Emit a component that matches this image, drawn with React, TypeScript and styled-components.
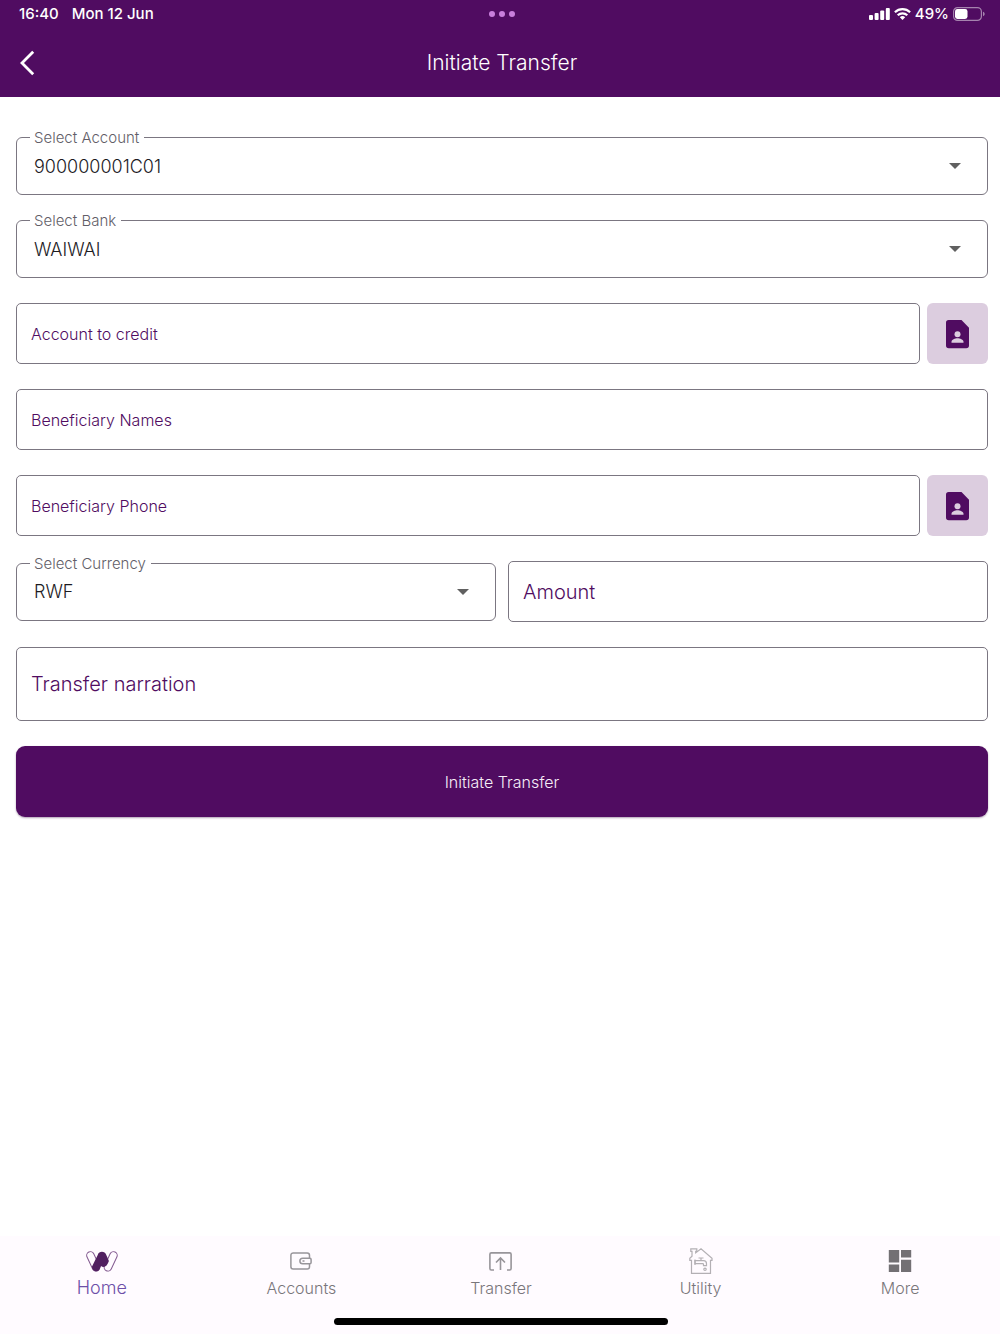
import React from 'react';
import styled, { createGlobalStyle } from 'styled-components';

const color = {
  brand: '#500c61',
  brandSoft: '#dccddf',
  outline: '#7b7681',
  label: '#625e68',
  text: '#1d1b1f',
  nav: '#fffbff',
  navText: '#79767a',
  navActive: '#6d4fa8',
};

const GlobalStyle = createGlobalStyle`
  *, *::before, *::after { box-sizing: border-box; }
  body {
    margin: 0;
    background: #fff;
    color: ${color.text};
    font-family: Inter, "Open Sans", sans-serif;
  }
  button, input, select { font: inherit; }
`;

const Page = styled.div`
  display: flex;
  flex-direction: column;
  min-height: 100vh;
`;

const Header = styled.header`
  background: ${color.brand};
  color: #fff;
`;

const StatusBar = styled.div`
  display: grid;
  grid-template-columns: 1fr auto 1fr;
  align-items: center;
  height: 28px;
  padding: 0 15px 0 19px;
  font-size: 15px;
  font-weight: 500;
  line-height: 20px;
`;

const StatusGroup = styled.div<{ $end?: boolean; $gap: number }>`
  display: flex;
  align-items: center;
  justify-content: ${(p) => (p.$end ? 'flex-end' : 'flex-start')};
  gap: ${(p) => p.$gap}px;
`;

const Dots = styled.div`
  display: flex;
  gap: 4px;
`;

const Dot = styled.span`
  width: 6px;
  height: 6px;
  border-radius: 50%;
  background: #c97fdc;
`;

const TitleBar = styled.div`
  display: grid;
  grid-template-columns: 48px 1fr 48px;
  align-items: center;
  height: 69px;
  padding: 0 12px 0 16px;
`;

const BackButton = styled.button`
  display: flex;
  align-items: center;
  width: 48px;
  height: 48px;
  padding: 0 0 0 3px;
  border: 0;
  background: none;
  color: inherit;
  cursor: pointer;
`;

const Title = styled.h1`
  margin: 0;
  font-size: 21px;
  font-weight: 300;
  line-height: 28px;
  text-align: center;
`;

const Form = styled.form`
  display: flex;
  flex: 1;
  flex-direction: column;
  gap: 25px;
  padding: 40px 12px 24px 16px;
`;

const PickerRow = styled.div`
  display: grid;
  grid-template-columns: 1fr 61px;
  gap: 7px;
`;

const HalfRow = styled.div`
  display: grid;
  grid-template-columns: 1fr 1fr;
  align-items: center;
  gap: 12px;
`;

const SelectBox = styled.div`
  position: relative;
`;

const FloatingLabel = styled.label`
  position: absolute;
  top: -9px;
  left: 14px;
  padding: 0 5px 0 4px;
  background: #fff;
  color: ${color.label};
  font-size: 15px;
  font-weight: 300;
  line-height: 20px;
`;

const Select = styled.select`
  display: block;
  width: 100%;
  height: 58px;
  padding: 0 48px 0 17px;
  border: 1px solid ${color.outline};
  border-radius: 6px;
  background: #fff;
  color: ${color.text};
  font-size: 18px;
  font-weight: 300;
  appearance: none;
`;

const Caret = styled.svg`
  position: absolute;
  top: 50%;
  right: 27px;
  width: 12px;
  height: 6px;
  margin-top: -3px;
  fill: #606060;
  pointer-events: none;
`;

const Input = styled.input<{ $large?: boolean; $tall?: boolean }>`
  display: block;
  width: 100%;
  min-width: 0;
  height: ${(p) => (p.$tall ? 74 : 61)}px;
  padding: 0 14px;
  border: 1px solid ${color.outline};
  border-radius: 5px;
  background: #fff;
  color: ${color.text};
  font-size: ${(p) => (p.$large ? 20 : 16)}px;
  font-weight: 300;

  &::placeholder {
    color: ${color.brand};
    opacity: 1;
  }
`;

const ContactButton = styled.button`
  display: flex;
  align-items: center;
  justify-content: center;
  height: 61px;
  padding: 0;
  border: 0;
  border-radius: 6px;
  background: ${color.brandSoft};
  color: ${color.brand};
  cursor: pointer;
`;

const SubmitButton = styled.button`
  height: 71px;
  border: 0;
  border-radius: 9px;
  background: ${color.brand};
  box-shadow: 0 1px 2px rgba(60, 20, 70, 0.4);
  color: #f6eef8;
  font-size: 16px;
  font-weight: 300;
  cursor: pointer;
`;

const BottomBar = styled.footer`
  display: flex;
  flex-direction: column;
  align-items: center;
  gap: 20px;
  padding: 12px 0 9px 2px;
  background: ${color.nav};
`;

const Tabs = styled.nav`
  display: grid;
  grid-template-columns: repeat(5, 1fr);
  width: 100%;
`;

const Tab = styled.a<{ $active?: boolean }>`
  display: flex;
  flex-direction: column;
  align-items: center;
  gap: 4px;
  color: ${(p) => (p.$active ? color.navActive : color.navText)};
  font-size: ${(p) => (p.$active ? 18 : 16)}px;
  font-weight: 300;
  line-height: 20px;
  text-decoration: none;
`;

const TabIcon = styled.span`
  display: flex;
  align-items: center;
  height: 26px;
`;

const HomeIndicator = styled.div`
  width: 334px;
  height: 7px;
  border-radius: 4px;
  background: #000;
`;

const SignalIcon = () => (
  <svg width="21" height="12" viewBox="0 0 21 12" fill="#fff" aria-hidden="true">
    <rect x="0" y="7" width="4" height="5" rx="1" />
    <rect x="5.6" y="5" width="4" height="7" rx="1" />
    <rect x="11.2" y="2.5" width="4" height="9.5" rx="1" />
    <rect x="16.8" y="0" width="4" height="12" rx="1" />
  </svg>
);

const WifiIcon = () => (
  <svg width="17" height="12" viewBox="0 0 17 12" fill="none" stroke="#fff" strokeWidth="2.2" aria-hidden="true">
    <path d="M.9 4.3a10.9 10.9 0 0 1 15.2 0" />
    <path d="M3.7 7.3a6.9 6.9 0 0 1 9.600 0" />
    <path d="M8.5 12 5.8 9.300a3.900 3.900 0 0 1 5.400 0Z" fill="#fff" stroke="none" />
  </svg>
);

const BatteryIcon = () => (
  <svg width="32" height="14" viewBox="0 0 32 14" aria-hidden="true">
    <rect x=".6" y=".6" width="27.8" height="12.8" rx="4" fill="none" stroke="#a583ae" strokeWidth="1.2" />
    <rect x="2" y="2" width="12.5" height="10" rx="2.4" fill="#fff" />
    <path d="M30 4.8c1.1.4 1.7 1.2 1.7 2.2S31.1 8.800 30 9.200Z" fill="#a583ae" />
  </svg>
);

const BackIcon = () => (
  <svg width="16" height="26" viewBox="0 0 16 26" fill="none" stroke="#fff" strokeWidth="2.8" aria-hidden="true">
    <path d="M14.200 1.800 3 13l11.200 11.200" />
  </svg>
);

const ContactIcon = () => (
  <svg width="24" height="30" viewBox="0 0 24 30" aria-hidden="true">
    <path d="M3 1h12.500L23 8.800v17.700a2.800 2.800 0 0 1-2.800 2.800H2.800A2.800 2.800 0 0 1 0 26.500V3.800A2.800 2.800 0 0 1 3 1Z" fill="currentColor" />
    <circle cx="11.500" cy="15.300" r="3" fill={color.brandSoft} />
    <path d="M5.500 23.800v-1c0-2.300 3.600-3.500 6-3.500s6 1.200 6 3.500v1Z" fill={color.brandSoft} />
  </svg>
);

const HomeIcon = () => (
  <svg width="32" height="21" viewBox="0 0 32 21" strokeLinecap="round" fill="none" aria-hidden="true">
    <path d="M4.400 4.400 10 16.400" stroke="#82598f" strokeWidth="8.400" />
    <path d="M4.400 4.400 10 16.400" stroke={color.nav} strokeWidth="6.400" />
    <path d="M27.500 4.400 21.900 16.400" stroke="#82598f" strokeWidth="8.400" />
    <path d="M27.500 4.400 21.900 16.400" stroke={color.nav} strokeWidth="6.400" />
    <path d="M5.900 15.800 11.600 4.200C13-.2 18.800-.2 20.300 4l2.600 6c-1 2.400-1.800 4.600-3.900 5.600-1.400.7-2.900.4-3.900-.6l-1.300 2.700C12.200 21.800 6 21 5.900 15.800Z" fill="#512060" />
  </svg>
);

const WalletIcon = () => (
  <svg width="22" height="18" viewBox="0 0 22 18" fill="none" stroke="#98959a" strokeWidth="1.500" aria-hidden="true">
    <path d="M19.500 6V3.200A2.300 2.300 0 0 0 17.200.9H3.200A2.300 2.300 0 0 0 .9 3.200v11.600a2.300 2.300 0 0 0 2.300 2.300h14a2.300 2.300 0 0 0 2.300-2.300V12" />
    <path d="M12.700 6.200h7.200a1.200 1.200 0 0 1 1.200 1.200v3.200a1.200 1.200 0 0 1-1.200 1.200h-7.200a2.800 2.800 0 0 1 0-5.600Z" />
    <path d="M12.500 9h2" />
  </svg>
);

const TransferIcon = () => (
  <svg width="23" height="19" viewBox="0 0 23 19" fill="none" stroke="#98959a" strokeWidth="1.600" aria-hidden="true">
    <path d="M5 18H2.300A1.400 1.400 0 0 1 .9 16.600V2.300A1.400 1.400 0 0 1 2.300.9h18.400a1.400 1.400 0 0 1 1.400 1.400v14.300a1.400 1.400 0 0 1-1.400 1.400H18" />
    <path d="M11.500 18V6.200M7 10.500l4.500-4.500 4.500 4.500" />
  </svg>
);

const UtilityIcon = () => (
  <svg width="24" height="26" viewBox="0 0 24 26" fill="none" stroke="#b3b0b4" strokeWidth="1.200" aria-hidden="true">
    <path d="M2.500 25.300V12.300H.8v-2.100L3 8.200V3.400H1.800V.8h6v2.600H6.700v1.500L12 .8l11 9.400v2.100h-1.500v13Z" />
    <path d="M6 12.700h8.500c2 0 3 1.200 3 3v2h-3v-1.300c0-.5-.3-.7-.8-.7H6Z" />
    <path d="M9.500 10h5M12 10v2.700M6 11.500v5.500" />
    <circle cx="16" cy="21.300" r="1.200" />
  </svg>
);

const MoreIcon = () => (
  <svg width="24" height="24" viewBox="0 0 24 24" fill="#737074" aria-hidden="true">
    <path d="M.8 1h10.400v12.400H.8zM13 1h10.200v7.500H13zM.8 15.600h10.400V23H.8zM13 10.800h10.200V23H13z" />
  </svg>
);

type SelectFieldProps = { id: string; label: string; options: string[] };

const SelectField = ({ id, label, options }: SelectFieldProps) => (
  <SelectBox>
    <Select id={id} defaultValue={options[0]}>
      {options.map((option) => (
        <option key={option}>{option}</option>
      ))}
    </Select>
    <FloatingLabel htmlFor={id}>{label}</FloatingLabel>
    <Caret viewBox="0 0 12 6" aria-hidden="true">
      <path d="M0 0h12L6 6Z" />
    </Caret>
  </SelectBox>
);

type TextFieldProps = { name: string; label: string; type?: string; large?: boolean; tall?: boolean };

const TextField = ({ name, label, type = 'text', large, tall }: TextFieldProps) => (
  <Input name={name} type={type} placeholder={label} aria-label={label} $large={large} $tall={tall} />
);

const tabs = [
  { label: 'Home', Icon: HomeIcon, active: true },
  { label: 'Accounts', Icon: WalletIcon },
  { label: 'Transfer', Icon: TransferIcon },
  { label: 'Utility', Icon: UtilityIcon },
  { label: 'More', Icon: MoreIcon },
];

export default function App() {
  return (
    <Page>
      <GlobalStyle />
      <Header>
        <StatusBar>
          <StatusGroup $gap={13}>
            <span>16:40</span>
            <span>Mon 12 Jun</span>
          </StatusGroup>
          <Dots>
            <Dot />
            <Dot />
            <Dot />
          </Dots>
          <StatusGroup $end $gap={4}>
            <SignalIcon />
            <WifiIcon />
            <span>49%</span>
            <BatteryIcon />
          </StatusGroup>
        </StatusBar>
        <TitleBar>
          <BackButton type="button" aria-label="Back">
            <BackIcon />
          </BackButton>
          <Title>Initiate Transfer</Title>
        </TitleBar>
      </Header>

      <Form onSubmit={(event: React.FormEvent) => event.preventDefault()}>
        <SelectField id="account" label="Select Account" options={['900000001C01']} />
        <SelectField id="bank" label="Select Bank" options={['WAIWAI']} />
        <PickerRow>
          <TextField name="creditAccount" label="Account to credit" />
          <ContactButton type="button" aria-label="Choose account">
            <ContactIcon />
          </ContactButton>
        </PickerRow>
        <TextField name="beneficiaryNames" label="Beneficiary Names" />
        <PickerRow>
          <TextField name="beneficiaryPhone" label="Beneficiary Phone" type="tel" />
          <ContactButton type="button" aria-label="Choose phone">
            <ContactIcon />
          </ContactButton>
        </PickerRow>
        <HalfRow>
          <SelectField id="currency" label="Select Currency" options={['RWF']} />
          <TextField name="amount" label="Amount" large />
        </HalfRow>
        <TextField name="narration" label="Transfer narration" large tall />
        <SubmitButton type="submit">Initiate Transfer</SubmitButton>
      </Form>

      <BottomBar>
        <Tabs>
          {tabs.map(({ label, Icon, active }) => (
            <Tab key={label} href={`#${label.toLowerCase()}`} $active={active} aria-current={active ? 'page' : undefined}>
              <TabIcon>
                <Icon />
              </TabIcon>
              {label}
            </Tab>
          ))}
        </Tabs>
        <HomeIndicator />
      </BottomBar>
    </Page>
  );
}
